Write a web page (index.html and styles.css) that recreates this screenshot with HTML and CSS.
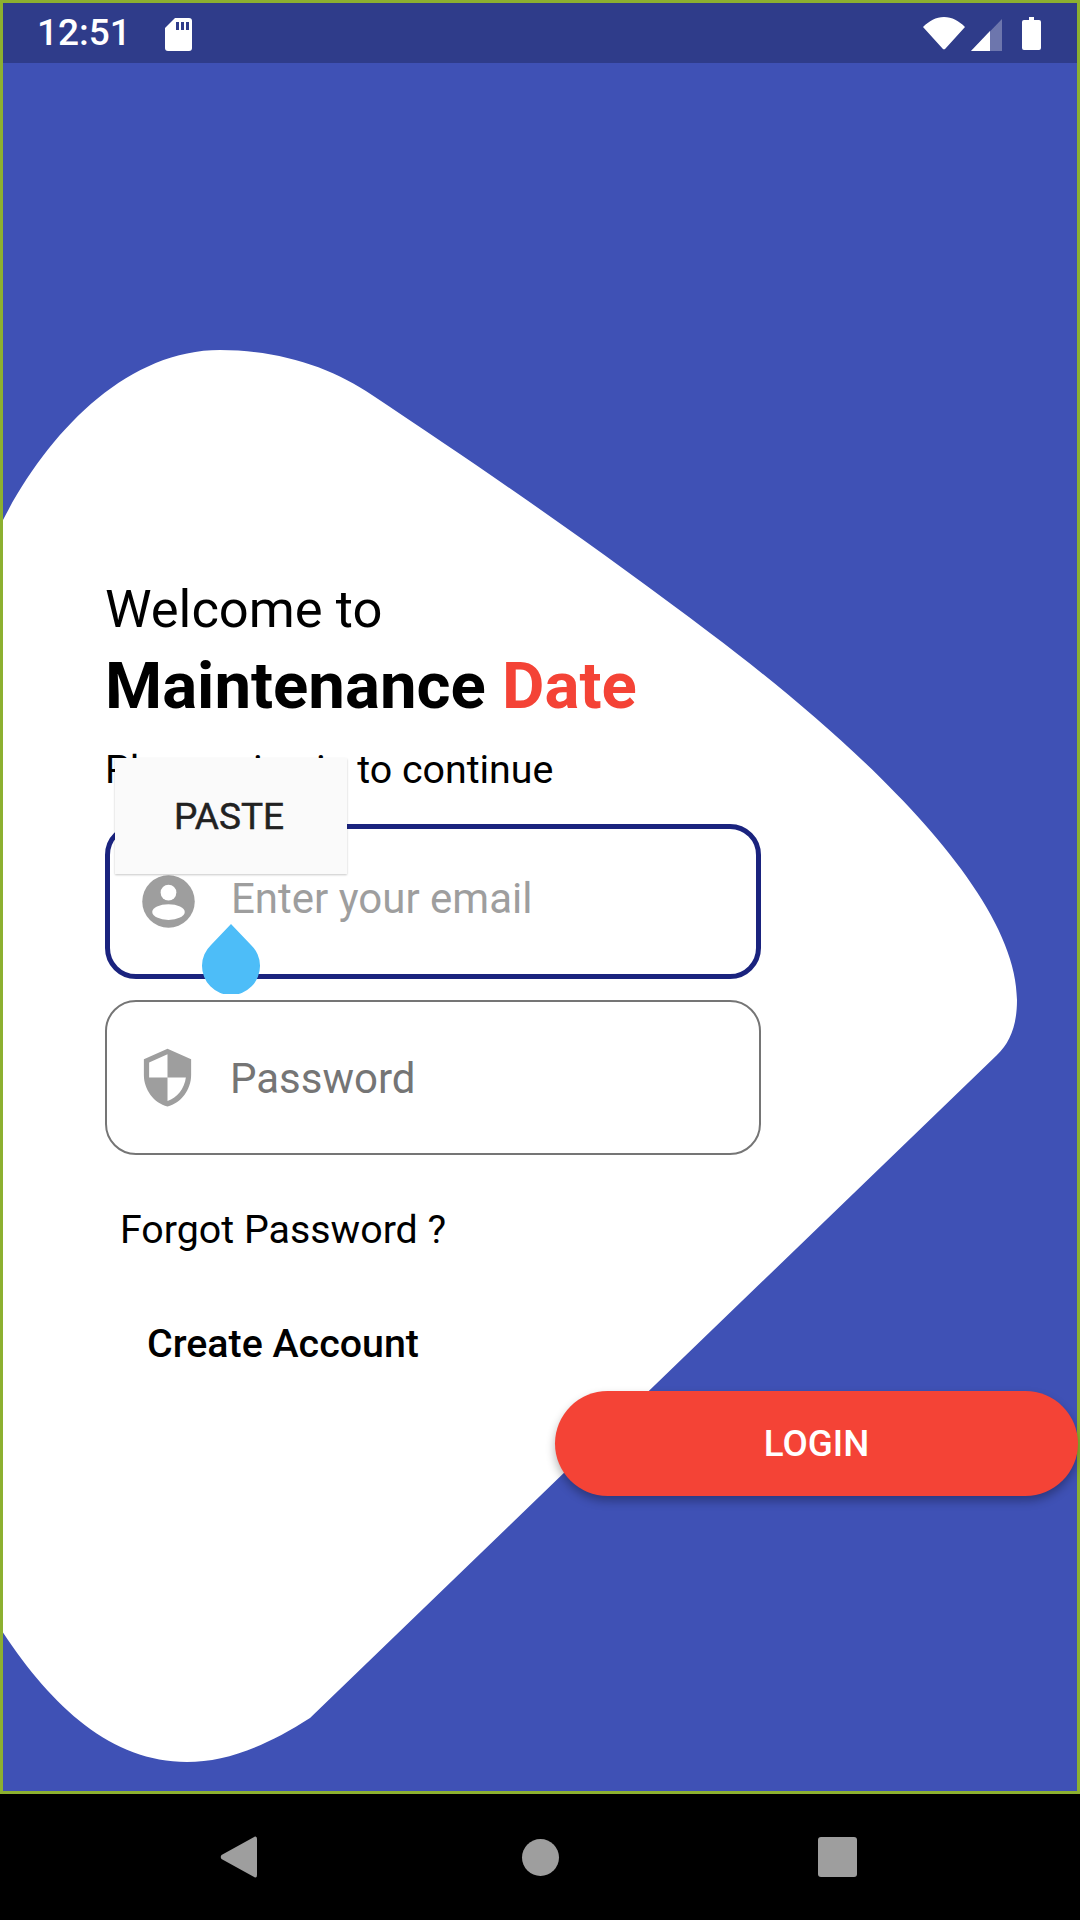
FILE: index.html
```html
<!DOCTYPE html>
<html lang="en">
<head>
<meta charset="utf-8">
<title>Maintenance Date</title>
<link rel="stylesheet" href="styles.css">
</head>
<body>
<div class="device">
  <div class="screen">
    <header class="status">
      <span class="clock">12:51</span>
      <svg class="sd" viewBox="0 0 27 33"><path d="M10 0H24a3 3 0 0 1 3 3V30a3 3 0 0 1-3 3H3a3 3 0 0 1-3-3V10z" fill="#fff"/><path d="M11 4h3v8h-3zM16 4h3v8h-3zM21 4h3v8h-3z" fill="#2f3c8a"/></svg>
      <span class="status-gap"></span>
      <svg class="wifi" viewBox="0 0 42 33"><path d="M0 10C6 4 13 0 21 0s15 4 21 10L22.500 31.500a2 2 0 0 1-3 0z" fill="#fff"/></svg>
      <svg class="cell" viewBox="0 0 31 32"><path d="M31 0V32H0z" fill="#fff" fill-opacity=".3"/><path d="M19 12V32H0z" fill="#fff"/></svg>
      <svg class="battery" viewBox="0 0 19 33"><path d="M7 0h5v3h5a2 2 0 0 1 2 2V31a2 2 0 0 1-2 2H2a2 2 0 0 1-2-2V5a2 2 0 0 1 2-2h5z" fill="#fff"/></svg>
    </header>
    <main class="main">
      <svg class="blob" viewBox="0 0 1074 1728"><path d="M-3 463C42 372 122 287 217 287C277 287 330 305 369 332C497 417 607 494 707 570C847 675 1014 827 1014 937C1014 962 1007 980 994 992L307 1655C262 1684 222 1699 184 1699C107 1699 47 1642 -3 1565Z" fill="#fff"/></svg>
      <section class="form">
        <h2 class="welcome">Welcome to</h2>
        <h1 class="title">Maintenance <span class="accent">Date</span></h1>
        <p class="subtitle">Please sign in to continue</p>
        <div class="field field-active">
          <svg class="field-icon" viewBox="0 0 24 24"><circle cx="12" cy="12" r="10" fill="#9e9e9e"/><circle cx="12" cy="8.600" r="3" fill="#fff"/><ellipse cx="12" cy="16" rx="6.200" ry="3" fill="#fff"/></svg>
          <span class="placeholder">Enter your email</span>
        </div>
        <div class="field field-idle">
          <svg class="field-icon" viewBox="0 0 24 24"><path d="M12 1L3 5v6c0 5.550 3.840 10.740 9 12 5.160-1.260 9-6.450 9-12V5l-9-4zm0 10.990h7c-.53 4.120-3.280 7.790-7 8.940V12H5V6.300l7-3.110v8.800z" fill="#9e9e9e"/></svg>
          <span class="placeholder placeholder-dark">Password</span>
        </div>
        <a class="forgot">Forgot Password ?</a>
        <a class="create">Create Account</a>
        <div class="login-row"><button class="login">LOGIN</button></div>
      </section>
      <div class="paste">PASTE</div>
      <svg class="handle" viewBox="0 0 58 70"><path d="M29 0L49 21A29 29 0 1 1 9 21Z" fill="#4dbdf8"/></svg>
    </main>
  </div>
  <nav class="navbar">
    <svg class="nav-back" viewBox="0 0 37 42"><path d="M35 0.500Q37 0 37 3V39Q37 42 35 41.500L1.500 23Q0 21 1.500 19Z" fill="#9e9e9e"/></svg>
    <span class="nav-home"></span>
    <span class="nav-recent"></span>
  </nav>
</div>
</body>
</html>
```
FILE: styles.css
```css
* { box-sizing: border-box; }
html, body { margin: 0; padding: 0; }
body { width: 1080px; height: 1920px; overflow: hidden; background: #000; font-family: Roboto, "Liberation Sans", sans-serif; }
.device { width: 1080px; height: 1920px; display: flex; flex-direction: column; }
.screen { height: 1794px; border: 3px solid #8cb030; display: flex; flex-direction: column; }
.status { height: 60px; flex: none; background: #2f3c8a; display: flex; align-items: center; padding: 0 36px 0 34px; }
.clock { color: #fff; font-size: 37px; font-weight: 500; line-height: 60px; margin-top: -1px; }
.sd { width: 27px; height: 33px; margin-left: 34px; margin-top: 2px; }
.status-gap { flex: 1; }
.wifi { width: 42px; height: 33px; margin-top: 0; }
.cell { width: 31px; height: 32px; margin-left: 6px; margin-top: 3px; }
.battery { width: 19px; height: 33px; margin-left: 20px; margin-top: 1px; }
.main { position: relative; flex: 1; background: #3f51b5; }
.blob { position: absolute; left: 0; top: 0; width: 1074px; height: 1728px; }
.form { position: relative; display: flex; flex-direction: column; align-items: flex-start; padding: 510px 0 0 102px; }
.welcome { margin: 0; font-size: 52.500px; font-weight: 400; line-height: 72px; color: #000; }
.title { margin: 4px 0 0; font-size: 65.300px; font-weight: 700; line-height: 74px; color: #000; }
.accent { color: #f44336; }
.subtitle { margin: 22px 0 0; font-size: 39.375px; line-height: 50px; color: #000; }
.field { width: 656px; height: 155px; border-radius: 31px; background: #fff; display: flex; align-items: center; }
.field-active { margin-top: 29px; border: 5px solid #1a237e; padding-left: 27px; }
.field-idle { margin-top: 21px; border: 2.600px solid #757575; padding-left: 29px; }
.field-icon { width: 63px; height: 63px; flex: none; }
.placeholder { margin: 0 0 6px 31px; font-size: 42px; line-height: 50px; color: #9e9e9e; }
.placeholder-dark { margin: 2px 0 0 31px; color: #757575; }
.forgot { margin: 50px 0 0 15px; font-size: 39.375px; line-height: 50px; color: #000; }
.create { margin: 64px 0 0 42px; font-size: 39.375px; font-weight: 500; line-height: 50px; color: #000; }
.login-row { align-self: stretch; display: flex; justify-content: flex-end; margin-top: 22px; margin-right: -1px; }
.login { width: 523px; height: 105px; border: 0; border-radius: 53px; background: #f44336; color: #fff; font-family: inherit; font-size: 36.750px; font-weight: 500; box-shadow: 0 5px 10px rgba(0, 0, 0, .3); }
.paste { position: absolute; left: 112px; top: 695px; width: 232px; height: 116px; padding-top: 2px; padding-right: 4px; background: #fafafa; color: #212121; font-size: 37px; font-weight: 400; -webkit-text-stroke: .5px #212121; line-height: 114px; text-align: center; box-shadow: 0 1px 2px rgba(0, 0, 0, .22); }
.handle { position: absolute; left: 199px; top: 861px; width: 58px; height: 70px; }
.navbar { flex: 1; display: flex; align-items: center; position: relative; }
.nav-back { position: absolute; left: 220px; top: 42px; width: 37px; height: 42px; }
.nav-home { position: absolute; left: 522px; top: 45px; width: 37px; height: 37px; border-radius: 50%; background: #9e9e9e; }
.nav-recent { position: absolute; left: 818px; top: 43px; width: 39px; height: 40px; border-radius: 3px; background: #9e9e9e; }
```
